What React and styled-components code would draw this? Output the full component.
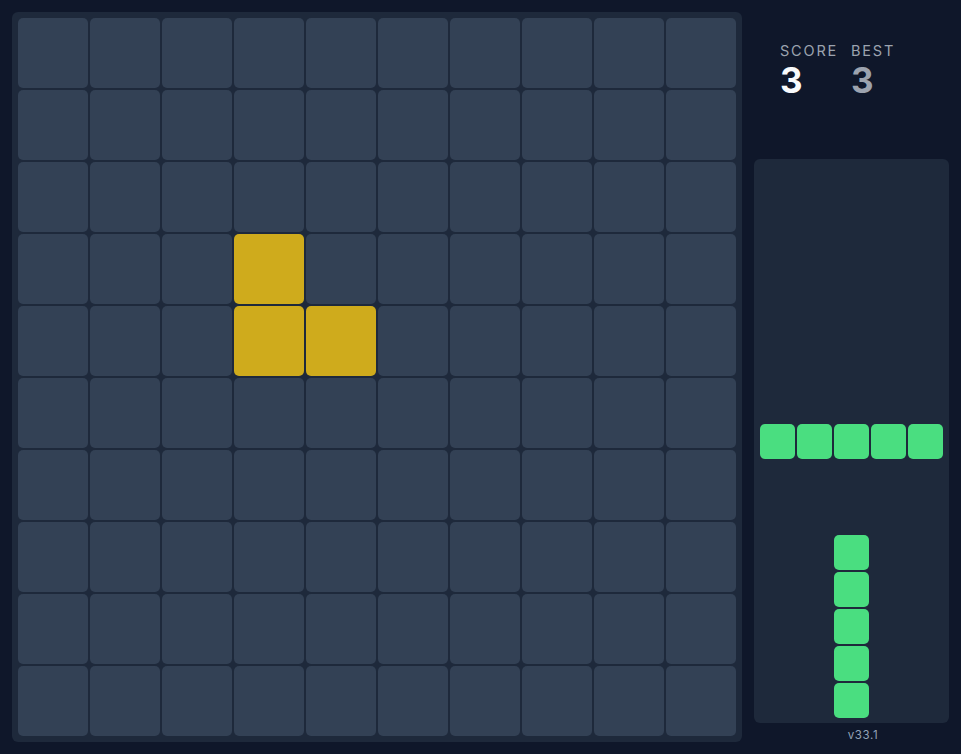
import React from 'react'
import styled, {createGlobalStyle} from 'styled-components'

const GlobalStyle = createGlobalStyle`
html, body {
    margin: 0;
    padding: 0;
    background: #0f172a;
    font-family: Inter, "Noto Sans", sans-serif;
}
`

const SIZE = 10
const filled = {'3-3': '#cfab1c', '4-3': '#cfab1c', '4-4': '#cfab1c'}

// pieces waiting in the tray, one per slot
const tray = [
    null,
    {rows: 1, cols: 5, align: 'center'},
    {rows: 5, cols: 1, align: 'flex-start'},
]

const Piece = ({rows, cols}) => (
    <PieceGrid $cols={cols}>
        {Array.from({length: rows * cols}).map((_, i) => (
            <PieceBlock key={i}/>
        ))}
    </PieceGrid>
)

const App = () => {
    const cells = []
    for (let r = 0; r < SIZE; r++) {
        for (let c = 0; c < SIZE; c++) {
            cells.push(<Cell key={`${r}-${c}`} $color={filled[`${r}-${c}`]}/>)
        }
    }
    return (
        <Page>
            <GlobalStyle/>
            <Board>{cells}</Board>
            <Side>
                <Scores>
                    <Stat>
                        <StatLabel>Score</StatLabel>
                        <StatValue>3</StatValue>
                    </Stat>
                    <Stat>
                        <StatLabel>Best</StatLabel>
                        <StatValue $muted>3</StatValue>
                    </Stat>
                </Scores>
                <Tray>
                    {tray.map((p, i) => (
                        <Slot key={i} $align={p ? p.align : 'center'}>
                            {p && <Piece rows={p.rows} cols={p.cols}/>}
                        </Slot>
                    ))}
                </Tray>
                <Version>v33.1</Version>
            </Side>
        </Page>
    )
}

const Page = styled.div`
display: flex;
gap: 12px;
padding: 12px;
height: 754px;
box-sizing: border-box;
`

const Board = styled.div`
display: grid;
grid-template-columns: repeat(10, 70px);
grid-template-rows: repeat(10, 70px);
gap: 2px;
padding: 6px;
background: #1e293b;
border-radius: 6px;
`

const Cell = styled.div`
background: ${p => p.$color || '#334155'};
border-radius: 5px;
`

const Side = styled.div`
width: 195px;
display: flex;
flex-direction: column;
`

const Scores = styled.div`
height: 147px;
box-sizing: border-box;
display: flex;
gap: 13px;
padding: 30px 0 0 26px;
`

const Stat = styled.div`
display: flex;
flex-direction: column;
`

const StatLabel = styled.div`
font-size: 14.5px;
letter-spacing: 1.8px;
text-transform: uppercase;
color: #9ca3af;
line-height: 18px;
`

const StatValue = styled.div`
font-size: 35px;
font-weight: 700;
line-height: 40px;
color: ${p => p.$muted ? '#9ca3af' : '#f8fafc'};
`

const Tray = styled.div`
height: 564px;
background: #1e293b;
border-radius: 6px;
display: grid;
grid-template-rows: repeat(3, 1fr);
`

const Slot = styled.div`
display: flex;
align-items: ${p => p.$align};
justify-content: center;
`

const PieceGrid = styled.div`
display: grid;
grid-template-columns: repeat(${p => p.$cols}, 35px);
grid-auto-rows: 35px;
gap: 2px;
`

const PieceBlock = styled.div`
background: #4ade80;
border-radius: 5px;
`

const Version = styled.div`
padding: 5px 0 0 23px;
text-align: center;
font-size: 11.5px;
letter-spacing: 0.6px;
color: #94a3b8;
`

export default App
